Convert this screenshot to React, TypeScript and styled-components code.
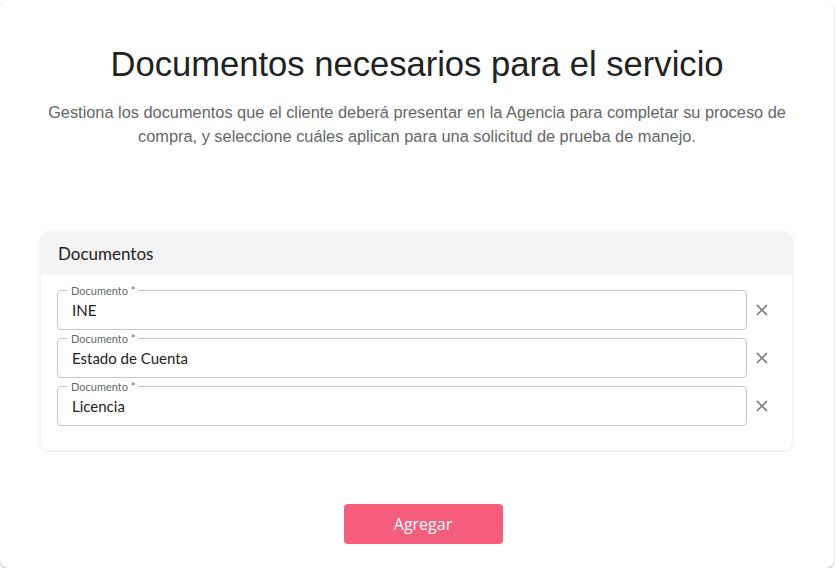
import React from "react";
import styled, { createGlobalStyle } from "styled-components";

const Global = createGlobalStyle`
  html, body { margin: 0; padding: 0; background: #ffffff; }
  body { font-family: "Liberation Sans", Arial, sans-serif; }
  * { box-sizing: border-box; }
`;

const Page = styled.div`
  width: 834px;
  height: 568px;
  border-radius: 8px;
  background: #fff;
  box-shadow: 0 1px 2px rgba(0, 0, 0, 0.35);
  display: flex;
  flex-direction: column;
  align-items: stretch;
  padding-top: 44px;
`;

const Title = styled.h1`
  margin: 0;
  text-align: center;
  font-family: "Liberation Sans", Arial, sans-serif;
  font-weight: 400;
  font-size: 34.6px;
  line-height: 40px;
  color: #222;
`;

const Subtitle = styled.p`
  margin: 16px 0 0;
  padding: 0 36px;
  text-align: center;
  font-family: "Liberation Sans", Arial, sans-serif;
  font-size: 16.35px;
  line-height: 24px;
  color: #666;
`;

const Section = styled.section`
  margin: 84px 42px 0 41px;
  border-radius: 8px;
  background: #fff;
  box-shadow: 0 1px 4px rgba(0, 0, 0, 0.1);
  overflow: hidden;
`;

const SectionHeader = styled.div`
  height: 43px;
  background: #f4f4f4;
  display: flex;
  align-items: center;
  padding-left: 17px;
  font-family: Lato, sans-serif;
  font-size: 17px;
  color: #222;
`;

const SectionBody = styled.div`
  padding: 15px 15px 24px 16px;
  display: flex;
  flex-direction: column;
  gap: 8px;
`;

const Row = styled.div`
  display: flex;
  align-items: center;
`;

const Field = styled.div`
  position: relative;
  flex: 1;
  height: 40px;
  border: 1px solid #c4c4c4;
  border-radius: 4px;
  display: flex;
  align-items: center;
  padding: 0 14px;
`;

const FieldLabel = styled.span`
  position: absolute;
  top: -7px;
  left: 10px;
  padding: 0 3px;
  background: #fff;
  font-family: Lato, sans-serif;
  font-size: 11px;
  line-height: 13px;
  color: #666;
`;

const Value = styled.span`
  font-family: Lato, sans-serif;
  font-size: 15px;
  color: #222;
`;

const RemoveButton = styled.button`
  width: 30px;
  height: 30px;
  border: none;
  background: transparent;
  padding: 0;
  display: flex;
  align-items: center;
  justify-content: center;
  cursor: pointer;
  color: #6f6f6f;
`;

const Footer = styled.div`
  display: flex;
  justify-content: center;
  margin-top: 54px;
  padding-left: 12px;
`;

const PrimaryButton = styled.button`
  width: 159px;
  height: 40px;
  border: none;
  border-radius: 4px;
  background: #f45e7c;
  color: #fff;
  font-family: "Open Sans", sans-serif;
  font-size: 16px;
  cursor: pointer;
`;

const CloseIcon = () => (
  <svg width="12" height="12" viewBox="0 0 12 12" fill="none">
    <path d="M1 1L11 11M11 1L1 11" stroke="currentColor" strokeWidth="1.5" />
  </svg>
);

const docs = ["INE", "Estado de Cuenta", "Licencia"];

export default function App() {
  return (
    <>
      <Global />
      <Page>
        <Title>Documentos necesarios para el servicio</Title>
        <Subtitle>
          Gestiona los documentos que el cliente deberá presentar en la Agencia para completar su proceso de
          compra, y seleccione cuáles aplican para una solicitud de prueba de manejo.
        </Subtitle>
        <Section>
          <SectionHeader>Documentos</SectionHeader>
          <SectionBody>
            {docs.map((d) => (
              <Row key={d}>
                <Field>
                  <FieldLabel>Documento *</FieldLabel>
                  <Value>{d}</Value>
                </Field>
                <RemoveButton aria-label="Eliminar">
                  <CloseIcon />
                </RemoveButton>
              </Row>
            ))}
          </SectionBody>
        </Section>
        <Footer>
          <PrimaryButton>Agregar</PrimaryButton>
        </Footer>
      </Page>
    </>
  );
}
